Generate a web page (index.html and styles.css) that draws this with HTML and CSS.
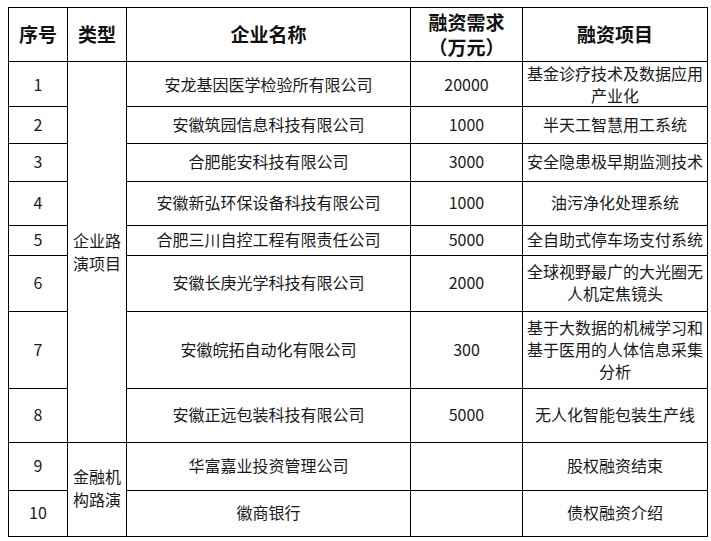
FILE: index.html
```html
<!DOCTYPE html>
<html lang="zh-CN">
<head>
<meta charset="utf-8">
<title>融资需求</title>
<link rel="stylesheet" href="styles.css">
</head>
<body>
<table class="grid">
  <colgroup>
    <col class="c-no"><col class="c-type"><col class="c-name"><col class="c-amt"><col class="c-proj">
  </colgroup>
  <thead>
    <tr class="h-head">
      <th>序号</th><th>类型</th><th>企业名称</th><th>融资需求<br>（万元）</th><th>融资项目</th>
    </tr>
  </thead>
  <tbody>
    <tr class="h44 tight"><td>1</td><td rowspan="8" class="type">企业路演项目</td><td>安龙基因医学检验所有限公司</td><td>20000</td><td>基金诊疗技术及数据应用产业化</td></tr>
    <tr class="h37"><td>2</td><td>安徽筑园信息科技有限公司</td><td>1000</td><td>半天工智慧用工系统</td></tr>
    <tr class="h38"><td>3</td><td>合肥能安科技有限公司</td><td>3000</td><td>安全隐患极早期监测技术</td></tr>
    <tr class="h44"><td>4</td><td>安徽新弘环保设备科技有限公司</td><td>1000</td><td>油污净化处理系统</td></tr>
    <tr class="h30"><td>5</td><td>合肥三川自控工程有限责任公司</td><td>5000</td><td>全自助式停车场支付系统</td></tr>
    <tr class="h56"><td>6</td><td>安徽长庚光学科技有限公司</td><td>2000</td><td>全球视野最广的大光圈无人机定焦镜头</td></tr>
    <tr class="h77"><td>7</td><td>安徽皖拓自动化有限公司</td><td>300</td><td>基于大数据的机械学习和基于医用的人体信息采集分析</td></tr>
    <tr class="h54"><td>8</td><td>安徽正远包装科技有限公司</td><td>5000</td><td>无人化智能包装生产线</td></tr>
    <tr class="h48"><td>9</td><td rowspan="2" class="type">金融机构路演</td><td>华富嘉业投资管理公司</td><td></td><td>股权融资结束</td></tr>
    <tr class="h46"><td>10</td><td>徽商银行</td><td></td><td>债权融资介绍</td></tr>
  </tbody>
</table>
</body>
</html>
```
FILE: styles.css
```css
html, body {
  background: #fff;
}
body {
  margin: 7px 0 0 8px;
  font-family: "Noto Sans CJK SC", "Noto Sans", sans-serif;
  color: #1a1a1a;
}
.grid {
  border-collapse: collapse;
  table-layout: fixed;
  width: 699px;
}
.c-no { width: 59px; }
.c-type { width: 59px; }
.c-name { width: 284px; }
.c-amt { width: 112px; }
.c-proj { width: 185px; }
.grid th, .grid td {
  border: 1px solid #000;
  padding: 0 2px 3px;
  text-align: center;
  vertical-align: middle;
  font-size: 16px;
  line-height: 22px;
  font-weight: 400;
}
.grid .tight td {
  padding-bottom: 0;
}
.grid th {
  font-size: 19px;
  line-height: 25px;
  font-weight: 700;
  color: #111;
  padding-bottom: 2px;
}
.grid .type {
  line-height: 23px;
}
.h-head { height: 54px; }
.h44 { height: 44px; }
.h37 { height: 37px; }
.h38 { height: 38px; }
.h30 { height: 30px; }
.h56 { height: 56px; }
.h77 { height: 77px; }
.h54 { height: 54px; }
.h48 { height: 48px; }
.h46 { height: 46px; }
```
